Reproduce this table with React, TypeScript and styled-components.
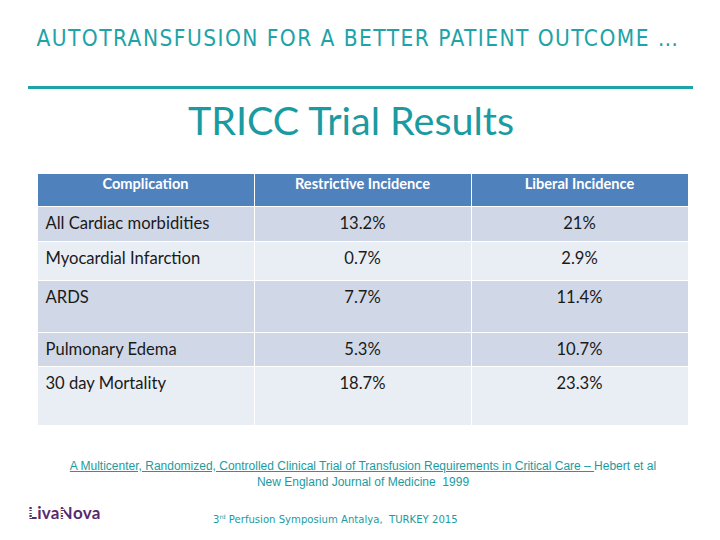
import React from "react";
import styled, { createGlobalStyle } from "styled-components";

const Global = createGlobalStyle`
  html, body { margin: 0; padding: 0; background: #ffffff; }
  body { width: 720px; height: 540px; overflow: hidden; }
`;

const Slide = styled.div`
  width: 720px;
  height: 540px;
  display: flex;
  flex-direction: column;
  align-items: center;
  box-sizing: border-box;
  padding-top: 26px;
`;

const TopTitle = styled.div`
  font-family: "DejaVu Sans Condensed", "DejaVu Sans", sans-serif;
  font-stretch: condensed;
  font-size: 22.5px;
  color: #1ea3a8;
  letter-spacing: 1.45px;
  line-height: 24px;
  white-space: nowrap;
  margin-left: -4px;
`;

const Rule = styled.div`
  width: 665px;
  height: 3px;
  background: #1ea3a8;
  margin-top: 36px;
`;

const Heading = styled.h1`
  margin: 7px 0 0 -18px;
  font-family: Lato, "Open Sans", sans-serif;
  font-weight: 400;
  font-size: 39.5px;
  line-height: 48px;
  color: #1a9ba1;
`;

const Table = styled.div`
  margin-top: 30px;
  width: 650px;
  margin-left: 5px;
  display: grid;
  grid-template-columns: 216px 217px 217px;
  font-family: Lato, "Open Sans", sans-serif;
`;

const HeadCell = styled.div<{ $first?: boolean }>`
  background: #4f81bd;
  color: #ffffff;
  font-weight: 700;
  font-size: 14.6px;
  line-height: 18px;
  height: 33px;
  box-sizing: border-box;
  padding-top: 1px;
  text-align: center;
  border-left: ${(p) => (p.$first ? "none" : "1px solid #ffffff")};
  border-bottom: 1px solid #ffffff;
`;

const Cell = styled.div<{ $shade: "dark" | "light"; $h: number; $label?: boolean; $first?: boolean }>`
  background: ${(p) => (p.$shade === "dark" ? "#d0d8e8" : "#e9edf4")};
  height: ${(p) => p.$h}px;
  box-sizing: border-box;
  color: #1a1a1a;
  font-size: 16.6px;
  line-height: 20px;
  padding: ${(p) => (p.$label ? "6px 0 0 8px" : "6px 0 0 0")};
  text-align: ${(p) => (p.$label ? "left" : "center")};
  border-left: ${(p) => (p.$first ? "none" : "1px solid #ffffff")};
  border-bottom: 1px solid #ffffff;
`;

const Citation = styled.div`
  margin-top: 32px;
  margin-left: 6px;
  font-family: "Liberation Sans", sans-serif;
  font-size: 12px;
  line-height: 16px;
  color: #1a9ba1;
  text-align: center;
`;

const Link = styled.span`
  text-decoration: underline;
  text-decoration-color: #1a9ba1;
`;

const Footer = styled.div`
  width: 720px;
  margin-top: 11px;
  display: flex;
  align-items: center;
  box-sizing: border-box;
  padding-left: 28px;
`;

const Logo = styled.div`
  font-family: Lato, "DejaVu Sans", sans-serif;
  font-weight: 700;
  font-size: 17px;
  letter-spacing: 0.3px;
  color: #5a2a6e;
  width: 185px;
  line-height: 20px;
`;

const StemLetter = styled.span`
  position: relative;
`;

const StemCuts = styled.span`
  position: absolute;
  left: 1px;
  top: 5px;
  width: 3px;
  height: 12px;
  background: repeating-linear-gradient(
    to bottom,
    transparent 0px,
    transparent 1.6px,
    #ffffff 1.6px,
    #ffffff 2.8px
  );
`;

const Symposium = styled.div`
  font-family: "DejaVu Sans", sans-serif;
  font-size: 10.1px;
  color: #1a9ba1;
  margin-top: 12px;
  white-space: pre;
`;

const Sup = styled.sup`
  font-size: 6px;
`;

type Row = { label: string; r: string; l: string; h: number; shade: "dark" | "light" };

const rows: Row[] = [
  { label: "All Cardiac morbidities", r: "13.2%", l: "21%", h: 35, shade: "dark" },
  { label: "Myocardial Infarction", r: "0.7%", l: "2.9%", h: 39, shade: "light" },
  { label: "ARDS", r: "7.7%", l: "11.4%", h: 52, shade: "dark" },
  { label: "Pulmonary Edema", r: "5.3%", l: "10.7%", h: 34, shade: "dark" },
  { label: "30 day Mortality", r: "18.7%", l: "23.3%", h: 59, shade: "light" },
];

export default function App() {
  return (
    <>
      <Global />
      <Slide>
        <TopTitle>AUTOTRANSFUSION FOR A BETTER PATIENT OUTCOME …</TopTitle>
        <Rule />
        <Heading>TRICC Trial Results</Heading>
        <Table>
          <HeadCell $first>Complication</HeadCell>
          <HeadCell>Restrictive Incidence</HeadCell>
          <HeadCell>Liberal Incidence</HeadCell>
          {rows.map((row) => (
            <React.Fragment key={row.label}>
              <Cell $shade={row.shade} $h={row.h} $label $first>
                {row.label}
              </Cell>
              <Cell $shade={row.shade} $h={row.h}>
                {row.r}
              </Cell>
              <Cell $shade={row.shade} $h={row.h}>
                {row.l}
              </Cell>
            </React.Fragment>
          ))}
        </Table>
        <Citation>
          <Link>A Multicenter, Randomized, Controlled Clinical Trial of Transfusion Requirements in Critical Care – </Link>
          Hebert et al
          <br />
          New England Journal of Medicine&nbsp; 1999
        </Citation>
        <Footer>
          <Logo>
            <StemLetter>
              L
              <StemCuts />
            </StemLetter>
            iva
            <StemLetter>
              N
              <StemCuts />
            </StemLetter>
            ova
          </Logo>
          <Symposium>
            3<Sup>rd</Sup> Perfusion Symposium Antalya,  TURKEY 2015
          </Symposium>
        </Footer>
      </Slide>
    </>
  );
}
